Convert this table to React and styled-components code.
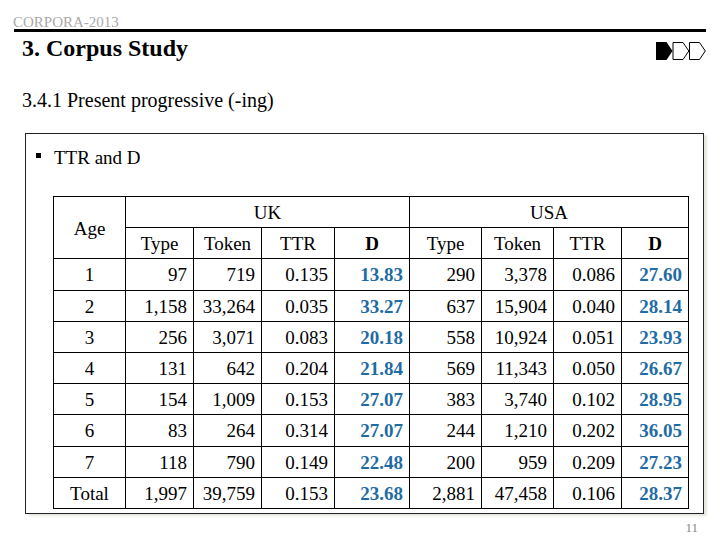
import React from "react";
import styled, { createGlobalStyle } from "styled-components";

const GlobalStyle = createGlobalStyle`
  html, body { margin: 0; padding: 0; background: #ffffff; }
  body { font-family: "Liberation Serif", "Times New Roman", serif; color: #000; }
`;

const Slide = styled.div`
  width: 720px;
  height: 540px;
  background: #ffffff;
  display: flex;
  flex-direction: column;
  box-sizing: border-box;
  overflow: hidden;
  font-family: "Liberation Serif", "Times New Roman", serif;
`;

const RunningHead = styled.div`
  padding: 15px 0 0 13px;
  font-family: "Liberation Serif", serif;
  font-size: 15px;
  line-height: 14px;
  color: #a9a9a9;
`;

const Rule = styled.div`
  height: 3px;
  margin: 0 14px;
  background: #000;
`;

const TitleRow = styled.div`
  display: flex;
  align-items: center;
  justify-content: space-between;
  height: 28px;
  margin-top: 2px;
  padding: 0 14px 0 22px;
`;

const Title = styled.div`
  font-family: "Liberation Serif", serif;
  font-size: 24px;
  line-height: 28px;
  font-weight: bold;
`;

const NavMark = styled.svg`
  display: block;
  width: 50px;
  height: 18px;
  margin-top: 6px;
`;

const Subtitle = styled.div`
  margin-top: 26px;
  padding-left: 22px;
  font-family: "Liberation Serif", serif;
  font-size: 20px;
  line-height: 24px;
`;

const Panel = styled.section`
  margin: 21px 0 0 25px;
  width: 679px;
  height: 381px;
  box-sizing: border-box;
  border: 1px solid #222;
  padding: 13px 0 0 10px;
  box-shadow: 3px 2px 2px rgba(150, 140, 110, 0.22);
`;

const BulletLine = styled.div`
  display: flex;
  align-items: flex-start;
  gap: 13px;
  font-family: "Liberation Serif", serif;
  font-size: 19px;
  line-height: 22px;
`;

const Bullet = styled.span`
  width: 5px;
  height: 5px;
  margin-top: 6px;
  background: #000;
  flex: none;
`;

const Table = styled.table`
  margin: 27px 0 0 17px;
  border-collapse: collapse;
  table-layout: fixed;
  width: 636px;
  font-family: "Liberation Serif", serif;
  font-size: 19px;
  line-height: 22px;
`;

const Row = styled.tr`
  height: 31.2px;
`;

const HeadCell = styled.th`
  border: 1px solid #000;
  padding: 2px 0 0;
  text-align: center;
  vertical-align: middle;
  font-family: "Liberation Serif", serif;
  font-weight: ${(p) => (p.$bold ? "bold" : "normal")};
`;

const Cell = styled.td`
  border: 1px solid #000;
  padding: 2px ${(p) => (p.$kind === "label" ? "0" : "6px")} 0 0;
  vertical-align: middle;
  white-space: nowrap;
  font-family: "Liberation Serif", serif;
  text-align: ${(p) => (p.$kind === "label" ? "center" : "right")};
  font-weight: ${(p) => (p.$kind === "d" ? "bold" : "normal")};
  color: ${(p) => (p.$kind === "d" ? "#1f6ca4" : "#000")};
`;

const Footer = styled.div`
  margin-top: 7px;
  padding-right: 22px;
  text-align: right;
  font-family: "Liberation Serif", serif;
  font-size: 13px;
  line-height: 14px;
  color: #8a8a8a;
`;

const widths = [72, 68, 68, 73, 75, 72, 72, 68, 67];

const rows = [
  ["1", "97", "719", "0.135", "13.83", "290", "3,378", "0.086", "27.60"],
  ["2", "1,158", "33,264", "0.035", "33.27", "637", "15,904", "0.040", "28.14"],
  ["3", "256", "3,071", "0.083", "20.18", "558", "10,924", "0.051", "23.93"],
  ["4", "131", "642", "0.204", "21.84", "569", "11,343", "0.050", "26.67"],
  ["5", "154", "1,009", "0.153", "27.07", "383", "3,740", "0.102", "28.95"],
  ["6", "83", "264", "0.314", "27.07", "244", "1,210", "0.202", "36.05"],
  ["7", "118", "790", "0.149", "22.48", "200", "959", "0.209", "27.23"],
  ["Total", "1,997", "39,759", "0.153", "23.68", "2,881", "47,458", "0.106", "28.37"],
];

const kindFor = (i) => (i === 0 ? "label" : i === 4 || i === 8 ? "d" : "num");

export default function App() {
  return (
    <>
      <GlobalStyle />
      <Slide>
        <RunningHead>CORPORA-2013</RunningHead>
        <Rule />
        <TitleRow>
          <Title>3. Corpus Study</Title>
          <NavMark viewBox="0 0 50 18">
            <path d="M0 0 H10.5 L16.5 9 L10.5 18 H0 Z" fill="#000" />
            <path d="M17 0.5 H27 L32.8 9 L27 17.5 H17 Z" fill="none" stroke="#000" strokeWidth="1" />
            <path d="M33.5 0.5 H43.5 L49.3 9 L43.5 17.5 H33.5 Z" fill="none" stroke="#000" strokeWidth="1" />
          </NavMark>
        </TitleRow>
        <Subtitle>3.4.1 Present progressive (-ing)</Subtitle>
        <Panel>
          <BulletLine>
            <Bullet />
            <span>TTR and D</span>
          </BulletLine>
          <Table>
            <colgroup>
              {widths.map((w, i) => (
                <col key={i} style={{ width: w }} />
              ))}
            </colgroup>
            <thead>
              <Row>
                <HeadCell rowSpan={2}>Age</HeadCell>
                <HeadCell colSpan={4}>UK</HeadCell>
                <HeadCell colSpan={4}>USA</HeadCell>
              </Row>
              <Row>
                <HeadCell>Type</HeadCell>
                <HeadCell>Token</HeadCell>
                <HeadCell>TTR</HeadCell>
                <HeadCell $bold>D</HeadCell>
                <HeadCell>Type</HeadCell>
                <HeadCell>Token</HeadCell>
                <HeadCell>TTR</HeadCell>
                <HeadCell $bold>D</HeadCell>
              </Row>
            </thead>
            <tbody>
              {rows.map((r) => (
                <Row key={r[0]}>
                  {r.map((v, i) => (
                    <Cell key={i} $kind={kindFor(i)}>
                      {v}
                    </Cell>
                  ))}
                </Row>
              ))}
            </tbody>
          </Table>
        </Panel>
        <Footer>11</Footer>
      </Slide>
    </>
  );
}
